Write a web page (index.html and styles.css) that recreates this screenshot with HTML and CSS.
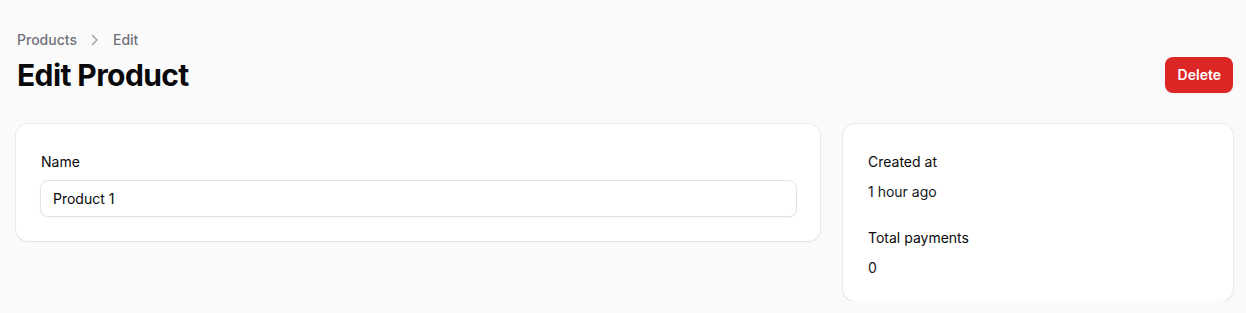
FILE: index.html
```html
<!DOCTYPE html>
<html lang="en">
<head>
<meta charset="utf-8">
<title>Edit Product</title>
<link rel="stylesheet" href="styles.css">
</head>
<body>
<main class="page">
  <header class="page-header">
    <div class="heading-group">
      <nav class="breadcrumbs">
        <a class="crumb" href="#">Products</a>
        <svg class="chevron" viewBox="0 0 20 20" width="20" height="20" aria-hidden="true"><path d="M7.5 5.5 12 10l-4.5 4.5" fill="none" stroke="currentColor" stroke-width="1.5" stroke-linecap="round" stroke-linejoin="round"/></svg>
        <span class="crumb">Edit</span>
      </nav>
      <h1 class="title">Edit Product</h1>
    </div>
    <button class="btn-danger" type="button">Delete</button>
  </header>
  <div class="grid">
    <section class="card form-card">
      <label class="field-label" for="name">Name</label>
      <input class="input" id="name" type="text" value="Product 1">
    </section>
    <aside class="card info-card">
      <div class="info">
        <div class="info-label">Created at</div>
        <div class="info-value">1 hour ago</div>
      </div>
      <div class="info">
        <div class="info-label">Total payments</div>
        <div class="info-value">0</div>
      </div>
    </aside>
  </div>
</main>
</body>
</html>
```
FILE: styles.css
```css
* { box-sizing: border-box; }
html, body { margin: 0; padding: 0; }
body {
  background: #fafafa;
  font-family: Inter, "Noto Sans", sans-serif;
  color: #09090b;
  -webkit-font-smoothing: antialiased;
}
.page {
  padding: 30px 13px 0 16px;
}
.page-header {
  display: flex;
  justify-content: space-between;
  align-items: flex-end;
  padding-left: 1px;
}
.heading-group {
  display: flex;
  flex-direction: column;
  gap: 7px;
}
.breadcrumbs {
  display: flex;
  align-items: center;
  gap: 8px;
  height: 20px;
  font-size: 14px;
  line-height: 20px;
  font-weight: 500;
}
.crumb {
  color: #71717a;
  text-decoration: none;
}
.chevron {
  color: #a1a1aa;
  width: 20px;
  height: 20px;
}
.title {
  margin: 0;
  font-size: 30px;
  line-height: 36px;
  font-weight: 700;
  letter-spacing: -0.6px;
  color: #09090b;
}
.btn-danger {
  height: 36px;
  padding: 0 12px 0 13px;
  border: 0;
  border-radius: 8px;
  background: #dc2626;
  color: #fff;
  font-family: inherit;
  font-size: 14px;
  font-weight: 600;
  line-height: 20px;
  box-shadow: 0 1px 2px rgba(0,0,0,0.05);
}
.grid {
  margin-top: 31px;
  display: grid;
  grid-template-columns: 1fr 390px;
  gap: 23px;
  align-items: start;
}
.card {
  background: #fff;
  border-radius: 12px;
  box-shadow: 0 0 0 1px rgba(9,9,11,0.06), 0 1px 2px rgba(0,0,0,0.05);
  padding: 28px 24px 24px 25px;
}
.form-card {
  display: flex;
  flex-direction: column;
  gap: 8px;
  padding-left: 24px;
}
.field-label {
  font-size: 14px;
  line-height: 20px;
  font-weight: 400;
  color: #09090b;
  padding-left: 1px;
}
.input {
  height: 37px;
  width: calc(100% + 1px);
  border: 1px solid #e4e4e7;
  border-radius: 8px;
  padding: 0 12px;
  font-family: inherit;
  font-size: 14px;
  color: #09090b;
  background: #fff;
  box-shadow: 0 1px 2px rgba(0,0,0,0.04);
  outline: none;
}
.info-card {
  display: flex;
  flex-direction: column;
  gap: 26px;
  padding-bottom: 23px;
}
.info {
  display: flex;
  flex-direction: column;
  gap: 10px;
}
.info-label {
  font-size: 14px;
  line-height: 20px;
  font-weight: 400;
  color: #09090b;
}
.info-value {
  font-size: 14px;
  line-height: 20px;
  color: #18181b;
}
```
